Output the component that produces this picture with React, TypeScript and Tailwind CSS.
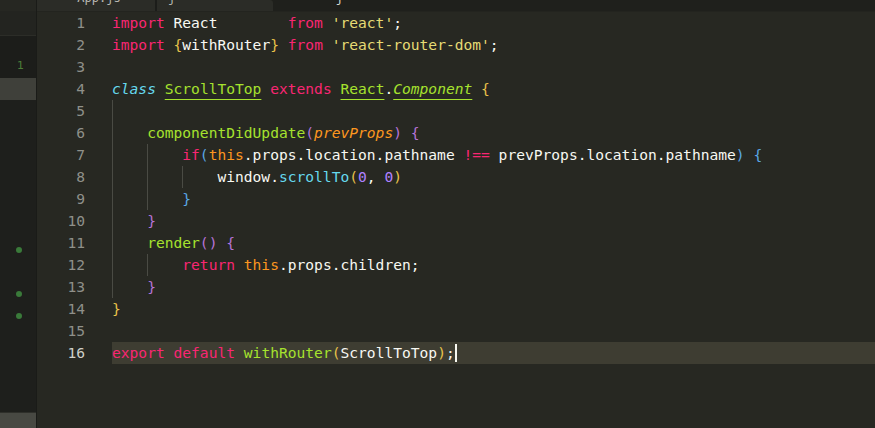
type Tok = [string, string];

const kw = "text-[#f92672]";
const pl = "text-[#f8f8f2]";
const str = "text-[#e6db74]";
const fn = "text-[#a6e22e]";
const cls = "text-[#66d9ef] italic";
const cyan = "text-[#66d9ef]";
const orange = "text-[#fd971f]";
const param = "text-[#fd971f] italic";
const num = "text-[#ae81ff]";
const b1 = "text-[#e8c24a]";
const b2 = "text-[#b673d8]";
const b3 = "text-[#5aa7e4]";
const ul = "underline decoration-[#a6e22e] underline-offset-[5px]";

// indent = number of 4-space levels that get a guide
const lines: { indent: number; toks: Tok[] }[] = [
  { indent: 0, toks: [["import", kw], [" React        ", pl], ["from", kw], [" 'react'", str], [";", pl]] },
  {
    indent: 0,
    toks: [["import", kw], [" ", pl], ["{", b1], ["withRouter", pl], ["}", b1], [" from", kw], [" 'react-router-dom'", str], [";", pl]],
  },
  { indent: 0, toks: [] },
  {
    indent: 0,
    toks: [
      ["class", cls],
      [" ", pl],
      ["ScrollToTop", `${fn} ${ul}`],
      [" extends", kw],
      [" ", pl],
      ["React", `${fn} ${ul}`],
      [".", pl],
      ["Component", `${fn} italic ${ul}`],
      [" {", b1],
    ],
  },
  { indent: 1, toks: [] },
  { indent: 1, toks: [["componentDidUpdate", fn], ["(", b2], ["prevProps", param], [")", b2], [" {", b2]] },
  {
    indent: 2,
    toks: [
      ["if", kw],
      ["(", b3],
      ["this", orange],
      [".props.location.pathname ", pl],
      ["!==", kw],
      [" prevProps.location.pathname", pl],
      [")", b3],
      [" {", b3],
    ],
  },
  { indent: 3, toks: [["window.", pl], ["scrollTo", cyan], ["(", b1], ["0", num], [", ", pl], ["0", num], [")", b1]] },
  { indent: 2, toks: [["}", b3]] },
  { indent: 1, toks: [["}", b2]] },
  { indent: 1, toks: [["render", fn], ["()", b2], [" ", pl], ["{", b2]] },
  { indent: 2, toks: [["return", kw], [" ", pl], ["this", orange], [".props.children;", pl]] },
  { indent: 1, toks: [["}", b2]] },
  { indent: 0, toks: [["}", b1]] },
  { indent: 0, toks: [] },
  {
    indent: 0,
    toks: [["export default", kw], [" ", pl], ["withRouter", fn], ["(", b1], ["ScrollToTop", pl], [")", b1], [";", pl]],
  },
];

// git gutter marks in the side panel
const dots = new Set([11, 13, 14]);

export default function App() {
  return (
    <div className="flex h-[428px] w-[875px] overflow-hidden bg-[#272822] font-['DejaVu_Sans_Mono',monospace] text-[14.6px]">
      {/* Sidebar */}
      <div className="flex w-[37px] shrink-0 flex-col border-r border-[#1a1b18] bg-[#1e1f1c]">
        <div className="h-[11px] bg-[#262722]" />
        <div className="h-[24px] bg-[#232420]" />
        <div className="flex h-[43px] items-end border-t border-[#2c2d28] bg-[#1c1d1a] pb-[4px] pl-[17px] font-['DejaVu_Sans',sans-serif] text-[11px] text-[#4d7d38]">
          1
        </div>
        <div className="h-[22px] bg-[#3f403a]" />
        <div className="flex flex-1 flex-col">
          <div className="h-[139px]" />
          {[11, 12, 13, 14].map((n) => (
            <div key={n} className="flex h-[22px] items-center justify-center">
              {dots.has(n) && <span className="ml-[2px] h-[6px] w-[6px] rounded-full bg-[#3a7a3a]" />}
            </div>
          ))}
        </div>
        <div className="h-[16px] border-t border-[#2e2f2a] bg-[#484943]" />
      </div>

      {/* Main */}
      <div className="flex flex-1 flex-col">
        {/* Tab bar */}
        <div className="flex h-[12px] shrink-0 border-b border-[#23241f] bg-[#1f201c] text-[12px] leading-none">
          <div className="flex w-[118px] justify-center overflow-hidden bg-[#2b2c27]">
            <span className="-mt-[8px] pl-[6px] text-[#b8b8b2]">App.js</span>
          </div>
          <div className="w-[2px] bg-[#1c1d1a]" />
          <div className="flex w-[116px] overflow-hidden rounded-tr-[3px] bg-[#2b2c27]">
            <span className="-mt-[8px] pl-[11px] text-[#b8b8b2]">j</span>
          </div>
          <div className="flex w-[70px] justify-end overflow-hidden">
            <span className="-mt-[8px] text-[#d8d8d2]">j</span>
          </div>
        </div>

        {/* Editor */}
        <div className="flex flex-1">
          {/* Gutter */}
          <div className="w-[75px] shrink-0 pr-[27px] text-right">
            {lines.map((_, i) => (
              <div key={i} className={`h-[22px] leading-[22px] ${i === 15 ? "text-[#d0d0ca]" : "text-[#8f908a]"}`}>
                {i + 1}
              </div>
            ))}
          </div>

          {/* Code */}
          <div className="flex-1 whitespace-pre">
            {lines.map((line, i) => (
              <div key={i} className={`flex h-[22px] items-stretch leading-[22px] ${i === 15 ? "bg-[#3e3d32]" : ""}`}>
                {Array.from({ length: line.indent }).map((_, k) => (
                  <span key={k} className="inline-block w-[4ch] shrink-0 border-l border-[#4a4b44]" />
                ))}
                <span>
                  {line.toks.map(([t, c], k) => (
                    <span key={k} className={c}>
                      {t}
                    </span>
                  ))}
                </span>
                {i === 15 && <span className="my-[2px] w-[2px] bg-[#f8f8f0]" />}
              </div>
            ))}
          </div>
        </div>
      </div>
    </div>
  );
}
